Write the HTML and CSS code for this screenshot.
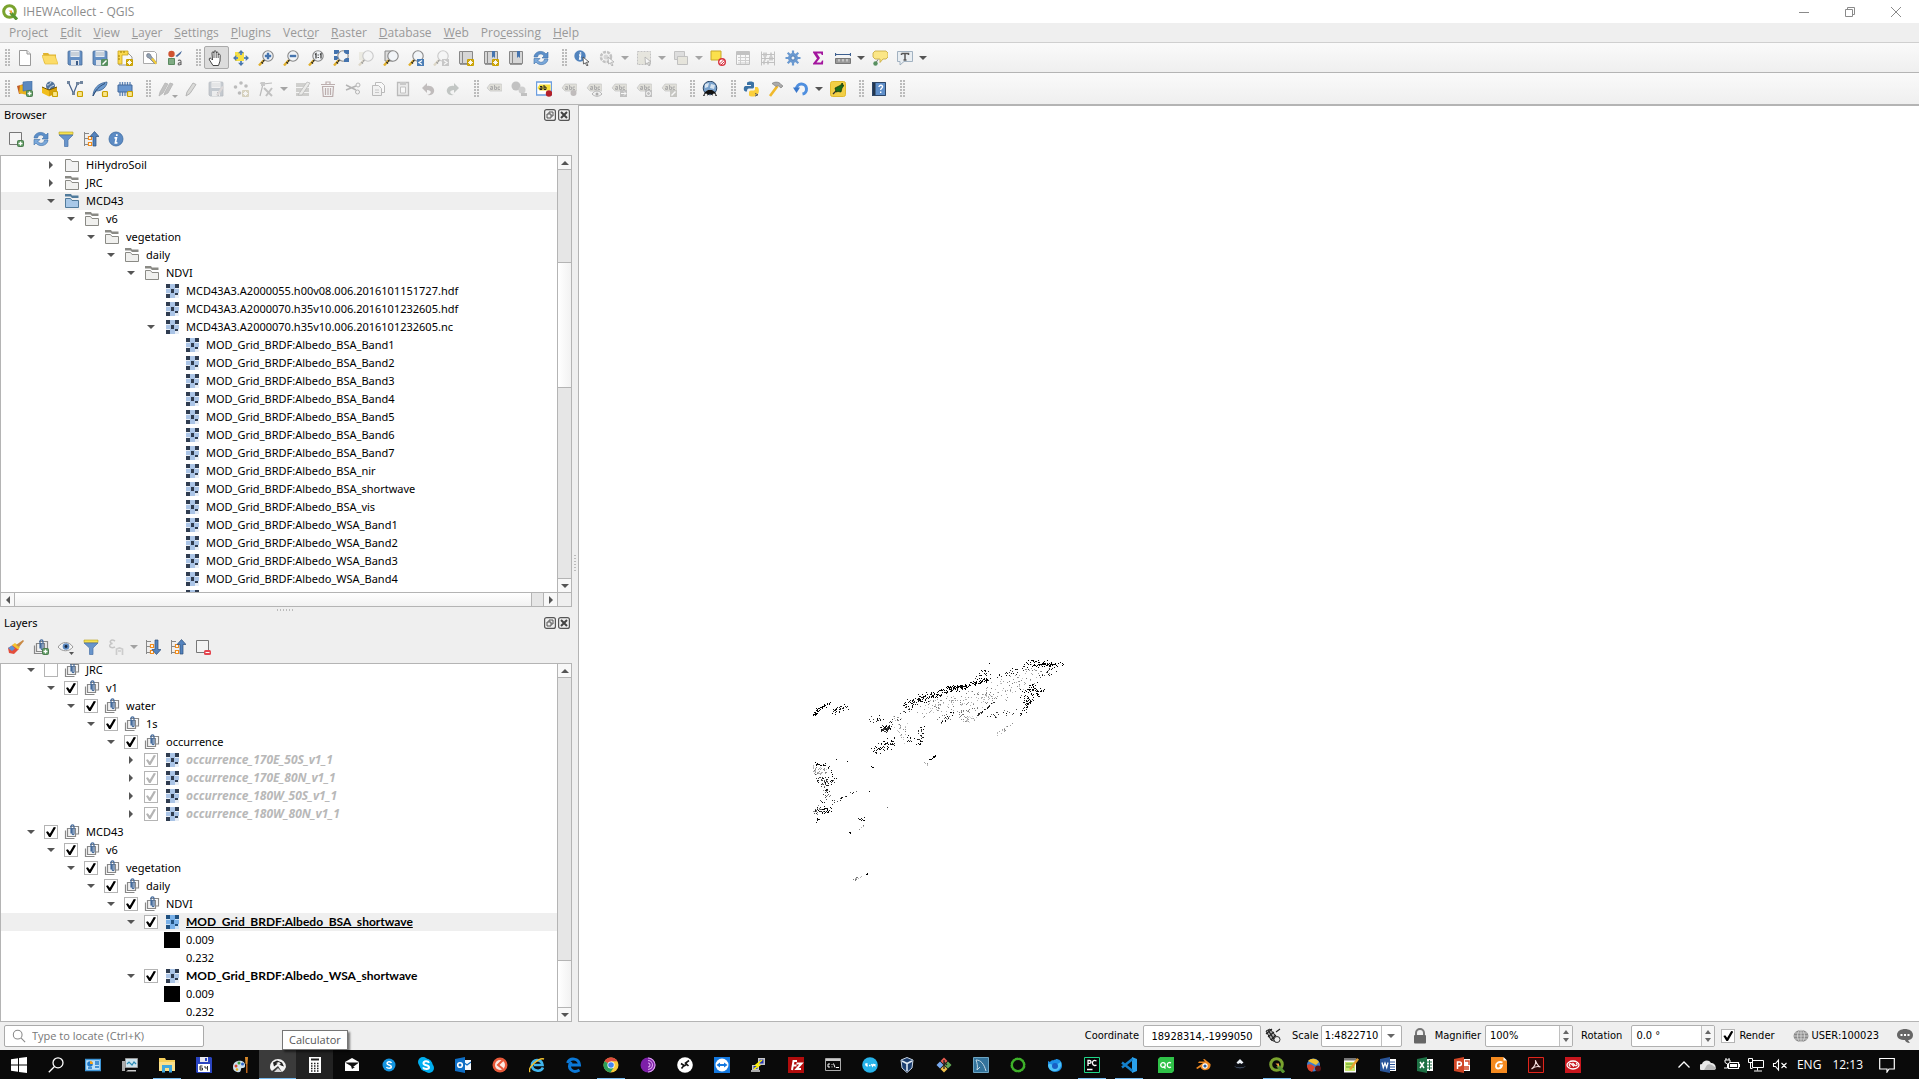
FILE: index.html
```
<!DOCTYPE html>
<html lang="en">
<head>
<meta charset="utf-8">
<title>IHEWAcollect - QGIS</title>
<link rel="stylesheet" href="styles.css">
</head>
<body>
<svg class="sprite" aria-hidden="true">
  <!-- badges -->
  <symbol id="b-plus" viewBox="0 0 16 16"><rect x="9.500" y="9.500" width="6" height="6" rx="1" fill="#5f9a62" stroke="#4b7d4e"/><path d="M12.500 10.500v4M10.500 12.500h4" stroke="#fff" stroke-width="1.300"/></symbol>
  <symbol id="b-star" viewBox="0 0 16 16"><rect x="9" y="9" width="7" height="7" rx="1" fill="#c9a100"/><path d="M12.500 10v5M10 12.500h5M10.800 10.800l3.400 3.400M14.200 10.800l-3.400 3.400" stroke="#fff" stroke-width=".9"/></symbol>
  <symbol id="b-box" viewBox="0 0 16 16"><rect x="10.500" y="10.500" width="5" height="5" rx="1" fill="#fbe68a" stroke="#c9a100" stroke-width="1.200"/></symbol>
  <!-- project -->
  <symbol id="new" viewBox="0 0 16 16"><path d="M2.500.500h7.500l3.500 3.500v11.500h-11z" fill="#fff" stroke="#999"/><path d="M10 .500v3.500h3.500" fill="#eee" stroke="#999"/></symbol>
  <symbol id="open" viewBox="0 0 16 16"><path d="M1 3h5l1.500 1.500H14V13H2z" fill="#e0b32e"/><path d="M0 5.500h13l3 8.500H3z" fill="#fcdc68" stroke="#e3bb3c" stroke-width=".7"/></symbol>
  <symbol id="save" viewBox="0 0 16 16"><path d="M1 2a1 1 0 0 1 1-1h12a1 1 0 0 1 1 1v13H2l-1-1z" fill="#6590c4" stroke="#4a6d99" stroke-width=".8"/><path d="M3.500 1h9v6h-9z" fill="#e6ecf2"/><path d="M4 3h8M4 5h8" stroke="#a8b4c0"/><path d="M4 10h8v5H4z" fill="#dfe4ea"/><path d="M9 11h2v4H9z" fill="#3c5b85"/></symbol>
  <symbol id="saveas" viewBox="0 0 16 16"><use href="#save"/><rect x="9" y="9" width="7" height="7" rx="1" fill="#589060"/><path d="M10.500 14.500l4-4" stroke="#fff" stroke-width="1.500"/></symbol>
  <symbol id="layout" viewBox="0 0 16 16"><path d="M2 3h9l4 4v8H2z" fill="#f8f8f8" stroke="#999"/><path d="M1 1h10v4H5v9H1z" fill="#fbd94d" stroke="#c9a21c" stroke-width=".8"/><path d="M4 1v2M7 1v2M1 6h2M1 9h2" stroke="#a07d00"/><use href="#b-star"/></symbol>
  <symbol id="layouts" viewBox="0 0 16 16"><path d="M1.500 1.500h11l2 2v10h-13z" fill="#fff" stroke="#aaa"/><path d="M5 4c2-1 4 0 4 2l5 6-1.500 1.500L7 8C5 8 4 6 5 4z" fill="#8fa0b0" stroke="#667" stroke-width=".6"/><path d="M9 9l4.500 5.500 1.500-1.500L11 8z" fill="#f3cc39"/></symbol>
  <symbol id="style" viewBox="0 0 16 16"><circle cx="4.500" cy="4" r="3.200" fill="#cf5331"/><path d="M8.500 6L15 .800 13.500 4 10 7z" fill="#45689b"/><path d="M1.500 8.500h6v6h-6z" fill="#7fab83" stroke="#5c8a61"/><path d="M11 10.500c2-1 3 0 3 1v3.500M14 12.500c-3 0-3.500 2-2 2.500 1 0 2-1 2-1" fill="none" stroke="#666" stroke-width="1.100"/></symbol>
  <!-- navigation -->
  <symbol id="hand" viewBox="0 0 16 16"><path d="M5 15.500L1.500 10c-1-1.500.5-2.500 1.500-1.500L4.500 10 4 3c0-1.500 1.700-1.500 2 0V2c0-1.800 2-1.800 2.200 0v1c.3-1.300 2-1.200 2 .3v1.500c.4-1 2-.8 2 .5L12 11l-1.500 4.500z" fill="#fff" stroke="#333" stroke-width=".9"/><path d="M6 3v5M8.200 3v5M10.200 4.500V8" stroke="#333" stroke-width=".8"/></symbol>
  <symbol id="pan" viewBox="0 0 16 16"><path d="M2 2h9v9H2z" fill="#f6e045"/><path d="M8 0l3 3.300H5zM8 16l3-3.300H5zM0 8l3.300-3v6zM16 8l-3.300-3v6z" fill="#4a76ab"/><path d="M7 3h2v2H7zM7 11h2v2H7zM3 7h2v2H3zM11 7h2v2h-2z" fill="#5b8ac0"/></symbol>
  <symbol id="lens" viewBox="0 0 16 16"><path d="M1 15.500L6 10" stroke="#e1b02c" stroke-width="2.400"/><path d="M3.500 12l1.500 1.500M5 11.500l2-2" stroke="#222" stroke-width="1.300"/><circle cx="10" cy="6" r="5.200" fill="#f2f5f8" stroke="#888" stroke-width="1.100"/></symbol>
  <symbol id="zin" viewBox="0 0 16 16"><use href="#lens"/><path d="M10 2.800v6.400M6.800 6h6.400" stroke="#4574ae" stroke-width="2.400"/></symbol>
  <symbol id="zout" viewBox="0 0 16 16"><use href="#lens"/><path d="M6.800 6h6.400" stroke="#4574ae" stroke-width="2.400"/></symbol>
  <symbol id="znative" viewBox="0 0 16 16"><use href="#lens"/><path d="M7 4.500l1-.8V8.500M12 4.500l1-.8V8.500M10.200 4.500v1M10.200 7v1" fill="none" stroke="#333" stroke-width="1.200"/></symbol>
  <symbol id="zfull" viewBox="0 0 16 16"><use href="#lens"/><path d="M1 0h5v2.500L4 4H1zM16 0h-5v2.500L13 4h3zM16 12h-5V9.500L13 8h3zM1 10V6h3l1.500 2L4 10z" fill="#4574ae"/></symbol>
  <symbol id="zsel" viewBox="0 0 16 16"><path d="M1 2h8v8H1z" fill="#e5dc98"/><use href="#lens"/></symbol>
  <symbol id="zlayer" viewBox="0 0 16 16"><path d="M2 1h8v10H2z" fill="#ddd" stroke="#888"/><use href="#lens"/></symbol>
  <symbol id="zlast" viewBox="0 0 16 16"><use href="#lens"/><path d="M9 9h7v7H9z" fill="#4a7db5"/><path d="M14 10.500l-3 2 3 2" fill="none" stroke="#fff" stroke-width="1.300"/></symbol>
  <symbol id="znext" viewBox="0 0 16 16"><use href="#lens"/><path d="M9 9h7v7H9z" fill="#888"/><path d="M11 10.500l3 2-3 2" fill="none" stroke="#fff" stroke-width="1.300"/></symbol>
  <symbol id="book" viewBox="0 0 16 16"><path d="M1.500 1.500h3v12h-3zM4.500 1.500h10v12h-10z" fill="#d6d6d6" stroke="#888"/><path d="M2 14.500h12" stroke="#999"/></symbol>
  <symbol id="newview" viewBox="0 0 16 16"><use href="#book"/><use href="#b-star"/></symbol>
  <symbol id="bookmark" viewBox="0 0 16 16"><use href="#book"/><path d="M9 1h3v7l-1.500-1.500L9 8z" fill="#4574ae"/></symbol>
  <symbol id="newbookmark" viewBox="0 0 16 16"><use href="#bookmark"/><use href="#b-star"/></symbol>
  <symbol id="refresh" viewBox="0 0 16 16"><path d="M1 7c.5-6 9-7.500 12-3l2-2v6H9l2-2C9 3 5 3.500 4.500 7z" fill="#5c8fc9" stroke="#3d6fa8" stroke-width=".6"/><path d="M15 9c-.5 6-9 7.500-12 3l-2 2V8.500h6L5 10.500c2 3 6 2 6.500-1.500z" fill="#7aa8da" stroke="#3d6fa8" stroke-width=".6"/></symbol>
  <!-- attributes -->
  <symbol id="info" viewBox="0 0 16 16"><circle cx="8" cy="8" r="7" fill="#5c8bc4" stroke="#3e6ca3" stroke-width=".8"/><path d="M8.800 3.200v1.900M6.500 6.800h1.900l-1 5h2" fill="none" stroke="#fff" stroke-width="1.700"/></symbol>
  <symbol id="cursor" viewBox="0 0 16 16"><path d="M9 7l6 5-2.600.3L14 15.300l-1.300.5-1.300-3L9.500 14z" fill="#fff" stroke="#444" stroke-width=".8"/></symbol>
  <symbol id="identify" viewBox="0 0 16 16"><circle cx="6" cy="6" r="5.700" fill="#5183bd"/><path d="M6.500 2.200v1.600M5 5h1.500l-.8 4h1.500" fill="none" stroke="#fff" stroke-width="1.500"/><use href="#cursor"/></symbol>
  <symbol id="action" viewBox="0 0 16 16"><circle cx="7" cy="7" r="5" fill="none" stroke="#777" stroke-width="2.500" stroke-dasharray="3 1"/><circle cx="7" cy="7" r="2.500" fill="#aaa"/><use href="#cursor"/></symbol>
  <symbol id="select" viewBox="0 0 16 16"><path d="M1.500 1.500h13v13h-13z" fill="#d8d090" stroke="#777" stroke-dasharray="2 1"/><use href="#cursor"/></symbol>
  <symbol id="selform" viewBox="0 0 16 16"><path d="M1.500 1.500h10v8h-10z" fill="#bbb" stroke="#777"/><path d="M4.500 6.500h10v8h-10z" fill="#ddd28a" stroke="#777"/></symbol>
  <symbol id="deselect" viewBox="0 0 16 16"><path d="M1 1h10v9H1z" fill="#fbe14c" stroke="#c9a92a"/><circle cx="12" cy="12" r="3.300" fill="#fff" stroke="#d6323f" stroke-width="1.400"/><path d="M9.500 14l4.500-4.500M11 15l3.500-3.500" stroke="#d6323f"/></symbol>
  <symbol id="table" viewBox="0 0 16 16"><path d="M1.500 1.500h13v13h-13z" fill="#fff" stroke="#777"/><path d="M1.500 3.500h13" stroke="#777" stroke-width="3"/><path d="M5.500 5v9M10.500 5v9M3 7.500h11M3 10.500h11M3 13h11" stroke="#999"/></symbol>
  <symbol id="abacus" viewBox="0 0 16 16"><path d="M1.500 1.500v14M14.500 1.500v14M1 4.500h14M1 8.500h14M1 12.500h14" stroke="#777"/><path d="M4 2.500v4M6 2.500v4M11 2.500v4M5 6.500v4M10 6.500v4M12 6.500v4M4 10.500v4M8 10.500v4" stroke="#777" stroke-width="1.500"/></symbol>
  <symbol id="gear" viewBox="0 0 16 16"><path d="M8 .500v15M.500 8h15M2.700 2.700l10.600 10.600M13.300 2.700L2.700 13.300" stroke="#6a99d0" stroke-width="2.200"/><circle cx="8" cy="8" r="5" fill="#6a99d0"/><circle cx="8" cy="8" r="2" fill="#eef3f9" stroke="#3e6ca3" stroke-width=".7"/></symbol>
  <symbol id="sigma" viewBox="0 0 16 16"><path d="M3 1.500h10v3.500h-1.200l-.8-1.500H7L10 8l-3.500 4.500H11l1-2h1.200L13 14.500H3v-1L7 8.500 3 2.500z" fill="#a3169e"/></symbol>
  <symbol id="measure" viewBox="0 0 16 16"><path d="M0 4.500h16M.500 3v3M15.500 3v3" stroke="#3d5f8f" stroke-width="1.200"/><path d="M.500 8.500h15v5H.500z" fill="#999" stroke="#777"/><path d="M4 9v2.500M8 9v2.500M12 9v2.500" stroke="#eee"/></symbol>
  <symbol id="maptip" viewBox="0 0 16 16"><path d="M3 1h11l2 2v4l-2 2h-3l-3 3.500V9H3L1 7V3z" fill="#fbe686" stroke="#c4a63a" stroke-width=".8"/><path d="M6 9.500l-2 3" stroke="#777"/><circle cx="3.500" cy="13.500" r="2.200" fill="#589060"/></symbol>
  <symbol id="textnote" viewBox="0 0 16 16"><path d="M.500 1.500h15v10H7l-4 3.500v-3.500H.500z" fill="#e9eef2" stroke="#9ab" stroke-width=".9"/><path d="M4.500 3.500h7V5M8 3.500V10M6.500 10h3M4.500 5V3.500" fill="none" stroke="#555" stroke-width="1.500"/></symbol>
  <!-- data sources -->
  <symbol id="dsm" viewBox="0 0 16 16"><path d="M0 5l7-2 2 8-7 2z" fill="#c05b26"/><path d="M3 4l8 1-1 9-8-2z" fill="#e8b21c"/><path d="M6 1l9-1v9l-9 1z" fill="#5b88bf" stroke="#3e6ca3" stroke-width=".6"/><use href="#b-plus"/></symbol>
  <symbol id="gpkg" viewBox="0 0 16 16"><circle cx="8.500" cy="5" r="4.500" fill="#50729b"/><path d="M5 4c2 0 3-1 4-3M7 8c1-3 4-3 5-4" stroke="#dce7f1" fill="none"/><path d="M0 6l7 3v6.500L0 12z" fill="#f1be1c"/><path d="M7 9l8-3v6l-8 3.500z" fill="#d9a20a"/><path d="M0 6l7 3 8-3" fill="none" stroke="#6e5300"/><use href="#b-box"/></symbol>
  <symbol id="shp" viewBox="0 0 16 16"><path d="M1.500 1.500l5 11 4-10 4-1" fill="none" stroke="#46618a" stroke-width="1.200"/><path d="M0 0h3v3H0zM9 1h3v3H9zM13 0h3v3h-3zM5 11h3v3H5z" fill="#71859e"/><use href="#b-box"/></symbol>
  <symbol id="spatialite" viewBox="0 0 16 16"><path d="M1 15C1 9 5 2 15 1c0 4-4 9-11 9z" fill="#6c9bd0" stroke="#3b6496" stroke-width=".8"/><path d="M1 15C3 10 7 5 13 2.500" fill="none" stroke="#2d4c75"/><use href="#b-box"/></symbol>
  <symbol id="chip" viewBox="0 0 16 16"><path d="M3 1v14M5.500 1v14M8 1v14M10.500 1v14M13 1v14" stroke="#5c83b4" stroke-width="1.300"/><path d="M1 4h14v7H1z" fill="#6896cf" stroke="#42699b"/><use href="#b-box"/></symbol>
  <!-- editing -->
  <symbol id="pencils" viewBox="0 0 16 16"><path d="M1 15l1-4 5-9 3 1-5 9zM6 14l1-3 5-9 3 1-5 9z" fill="#777" stroke="#555" stroke-width=".8"/></symbol>
  <symbol id="pencil" viewBox="0 0 16 16"><path d="M3 15l1-4 6-9 3 1.500-6 9z" fill="#b5b5a5" stroke="#555"/></symbol>
  <symbol id="saveedit" viewBox="0 0 16 16"><use href="#save"/><path d="M8 14l6-9 2 1-6 9z" fill="#caa"/></symbol>
  <symbol id="addpt" viewBox="0 0 16 16"><circle cx="2.500" cy="6" r="1.800" fill="#666"/><circle cx="6.500" cy="12" r="1.800" fill="#666"/><circle cx="8" cy="2" r="1.800" fill="#666"/><circle cx="13" cy="5" r="1.800" fill="#666"/><use href="#b-star"/></symbol>
  <symbol id="vertex" viewBox="0 0 16 16"><path d="M2 15L5 3l9-1M5 3l-3-1" fill="none" stroke="#666" stroke-width="1.200"/><path d="M3 1h4v4H3z" fill="#888"/><path d="M6 7l8 8M14 7l-6 8" stroke="#777" stroke-width="2"/></symbol>
  <symbol id="multiedit" viewBox="0 0 16 16"><path d="M1 2h13v4H1zM1 7h13v4H1zM1 12h13v3H1z" fill="#998"/><path d="M3 14L12 1l3 1-8 12z" fill="#ddc" stroke="#555" stroke-width=".7"/></symbol>
  <symbol id="trash" viewBox="0 0 16 16"><path d="M1 3.500h14M6 3V1h4v2M2.500 5.500h11l-.8 10H3.300zM5.500 7v7M8 7v7M10.500 7v7" fill="none" stroke="#a33" stroke-width="1.200"/></symbol>
  <symbol id="cut" viewBox="0 0 16 16"><path d="M1 4l10 5M1 9l10-4" stroke="#555" stroke-width="1.500"/><circle cx="13" cy="4" r="2" fill="none" stroke="#555"/><circle cx="12.500" cy="11" r="2" fill="none" stroke="#555"/></symbol>
  <symbol id="copy" viewBox="0 0 16 16"><path d="M5.500 1.500h6l3 3v7h-9z" fill="#fff" stroke="#666"/><path d="M2.500 4.500h6l3 3v7h-9z" fill="#eee" stroke="#666"/><path d="M5 9h4M5 11.500h4" stroke="#888"/></symbol>
  <symbol id="paste" viewBox="0 0 16 16"><path d="M2.500 1.500h11v13h-11z" fill="#ddd" stroke="#666" stroke-width="1.300"/><path d="M5 1h6v3H5z" fill="#888"/><path d="M5.500 6h5v6h-5z" fill="#fff" stroke="#777"/></symbol>
  <symbol id="undo" viewBox="0 0 16 16"><path d="M2 7l5-5v3c5-1 8 3 7 6-1 3-4 3.500-7 3 5-1 5-5 0-5v3z" fill="#866"/></symbol>
  <symbol id="redo" viewBox="0 0 16 16"><path d="M14 7L9 2v3C4 4 1 8 2 11c1 3 4 3.500 7 3-5-1-5-5 0-5v3z" fill="#687"/></symbol>
  <!-- labels -->
  <symbol id="tag" viewBox="0 0 16 16"><path d="M1 7l3-4h11a1 1 0 0 1 1 1v6H4z" fill="#c8c28c" stroke="#888" stroke-width=".8"/><path d="M4.500 5.500h2v3h-2v-1.500h2M8.500 4v4.500h2V6h-2M14 6h-2v2.500h2" fill="none" stroke="#444"/></symbol>
  <symbol id="diag" viewBox="0 0 16 16"><circle cx="5" cy="5" r="4.500" fill="#777"/><circle cx="11" cy="9" r="3.500" fill="#999"/><path d="M10 12h6v3h-6z" fill="#777"/></symbol>
  <symbol id="pinlab" viewBox="0 0 16 16"><path d="M.500 1h15v13H.500z" fill="#fff" stroke="#6d9fe0" stroke-width="1.400"/><path d="M1.500 7l2-3.500h11V9.500h-11z" fill="#f6df3a"/><path d="M4 5.500h2v3H4V7h2M8 4v4.500h2V6H8" fill="none" stroke="#222"/><circle cx="13" cy="12.500" r="3.200" fill="#b3202a"/></symbol>
  <symbol id="tagpin" viewBox="0 0 16 16"><use href="#tag"/><circle cx="12.500" cy="12" r="3" fill="#866"/></symbol>
  <symbol id="tageye" viewBox="0 0 16 16"><use href="#tag"/><path d="M6 13c3-4 7-4 10 0-3 3-7 3-10 0z" fill="#eee" stroke="#555"/><circle cx="11" cy="13" r="1.500" fill="#444"/></symbol>
  <symbol id="tagmove" viewBox="0 0 16 16"><use href="#tag"/><path d="M9 9h7v7H9z" fill="#777"/><path d="M10 12.500h5M13 10.500l2 2-2 2" fill="none" stroke="#fff"/></symbol>
  <symbol id="tagrot" viewBox="0 0 16 16"><use href="#tag"/><path d="M9 9h7v7H9z" fill="#777"/><circle cx="12.500" cy="12.500" r="2" fill="none" stroke="#fff"/></symbol>
  <symbol id="tagedit" viewBox="0 0 16 16"><use href="#tag"/><path d="M9 9h7v7H9z" fill="#886"/><path d="M10.500 14.500l4-4" stroke="#fff" stroke-width="1.400"/></symbol>
  <!-- plugins -->
  <symbol id="metasearch" viewBox="0 0 16 16"><circle cx="8" cy="7" r="6.800" fill="#7aa2cc" stroke="#2c4766"/><path d="M3 3l4-1-1 4-3 1zM9 3l4 1-1 4-4-1zM5 9l3 0-1 3z" fill="#d6e4f0"/><path d="M3 11l3-2h4l3 2 2 4h-4l-2-2H7l-2 2H1z" fill="#111"/><circle cx="4" cy="14" r="1.500" fill="#eee"/><circle cx="12" cy="14" r="1.500" fill="#eee"/></symbol>
  <symbol id="python" viewBox="0 0 16 16"><path d="M4 4V2c0-2 7-2 7 0v4c0 1-1 1.500-2 1.500H6c-1.500 0-2 1-2 3H2.500C0 10 .500 5 2.500 5H8V4z" fill="#3a72a5"/><path d="M6 12v2c0 2 7 2 7 0v-1h2c1.500-2 1-7-1-7h-2v2c0 1-1 1.500-2 1.500H8c-1.500 0-2 1-2 2.500z" fill="#fbcf3c"/><path d="M12 12.500l3 1.300-3 1.300" fill="none" stroke="#555"/></symbol>
  <symbol id="hammer" viewBox="0 0 16 16"><path d="M2 15L9.500 5" stroke="#f0b92d" stroke-width="2.600"/><path d="M4 2.500c3-2 7-2 9 1l2 1.500-2 2-3-2.500-2 1z" fill="#aaa" stroke="#777" stroke-width=".6"/></symbol>
  <symbol id="reload" viewBox="0 0 16 16"><path d="M3.500 8a5 5 0 1 1 6 5" fill="none" stroke="#4f8fdf" stroke-width="3"/><path d="M0 6.500h7L3.500 12z" fill="#3a78cc"/></symbol>
  <symbol id="plug" viewBox="0 0 16 16"><rect x=".5" y=".5" width="15" height="15" rx="2" fill="#f2cf45" stroke="#e0b92f"/><path d="M3 13l3-3" stroke="#333" stroke-width="1.200"/><path d="M5 7l6-3 1-2 1 1-1 1.500 1.500-.5v1L12 7l-1 4-3-.500L6 11z" fill="#1a6a1a" stroke="#0d330d" stroke-width=".7"/></symbol>
  <symbol id="help" viewBox="0 0 16 16"><path d="M1 1h14v14H1z" fill="#5f8fca"/><path d="M1 1h3.500v14H1z" fill="#23364e"/><path d="M1.500 1.500h13v13h-13z" fill="none" stroke="#2d4769"/><path d="M8 6c0-2.300 4-2.300 3.500.2-.3 1.200-1.800 1.200-1.800 2.800M9.700 10.500V12" fill="none" stroke="#fff" stroke-width="1.400"/></symbol>
  <!-- panel tools -->
  <symbol id="addsel" viewBox="0 0 16 16"><path d="M1.500 1.500h12v12h-12z" fill="#f4f4f4" stroke="#777"/><use href="#b-plus"/></symbol>
  <symbol id="filter" viewBox="0 0 16 16"><path d="M1 1h14v2.500H1z" fill="#f6e251" stroke="#b59e1d" stroke-width=".6"/><path d="M1 4h14l-5 5v6.500H6.500V9z" fill="#6794cb" stroke="#4a73a8" stroke-width=".7"/></symbol>
  <symbol id="treebits" viewBox="0 0 16 16"><path d="M1.500 15V1M1 2.500h5M2 7.500h3M2 13.500h3" fill="none" stroke="#888"/><path d="M5.500 5.500h3v3h-3zM5.500 11.500h3v3h-3z" fill="#fff" stroke="#f18c1c" stroke-width="1.200"/></symbol>
  <symbol id="collapse" viewBox="0 0 16 16"><use href="#treebits"/><path d="M11.500.500l4.500 5h-3V15h-3V5.500H7z" fill="#5483bd" stroke="#2c4d78" stroke-width=".7"/></symbol>
  <symbol id="expand" viewBox="0 0 16 16"><use href="#treebits"/><path d="M11.500 15.500l4.500-5h-3V1h-3v9.500H7z" fill="#5483bd" stroke="#2c4d78" stroke-width=".7"/></symbol>
  <symbol id="brush" viewBox="0 0 16 16"><path d="M0 9l5-3 6 4-5 5-5-1z" fill="#e34e3c"/><path d="M4 6l3-2 5 4-2 2.500z" fill="#f3c32e"/><path d="M0 9l4-2.500 3 3L4 12z" fill="#5c93d6"/><path d="M8 6l7-5 1 1-5 6z" fill="#c98a45"/></symbol>
  <symbol id="group" viewBox="0 0 16 16"><path d="M1.500 6.500v8h9" fill="none" stroke="#888" stroke-width="1.200"/><path d="M3.500 4.500h8v8h-8z" fill="#f2f2f2" stroke="#888" stroke-width="1.200"/><path d="M6 2.500h8.500v7.500H12" fill="none" stroke="#888" stroke-width="1.200"/><path d="M7 9.500V2.500c0-2.300 3-2.300 3 0v7c0 1.500-1.800 1.500-1.800 0V4" fill="none" stroke="#42699b" stroke-width="1.200"/></symbol>
  <symbol id="addgroup" viewBox="0 0 16 16"><use href="#group"/><use href="#b-plus"/></symbol>
  <symbol id="eye" viewBox="0 0 16 16"><path d="M0 8c4-6 11-6 15 0-4 5-11 5-15 0z" fill="#f5f5f5" stroke="#999"/><circle cx="8" cy="7.500" r="3.300" fill="#5b88c0"/><circle cx="8" cy="7.500" r="1.400" fill="#16273e"/><path d="M11 13h5l-2.500 3z" fill="#555"/></symbol>
  <symbol id="expr" viewBox="0 0 16 16"><path d="M7 2C3-.500 0 3.500 4.500 4.500 0 5 1 10.500 7 8" fill="none" stroke="#888" stroke-width="1.500"/><path d="M8.500 16V10l3-1 3 1v6M10 12h3" fill="none" stroke="#999" stroke-width="1.700"/></symbol>
  <symbol id="remove" viewBox="0 0 16 16"><path d="M1.500 1.500h12v12h-12z" fill="#f4f4f4" stroke="#777"/><rect x="9" y="11" width="7" height="5" rx="1.500" fill="#e4454f"/><path d="M10.500 13.500h4" stroke="#fff"/></symbol>
  <!-- tree -->
  <symbol id="folder" viewBox="0 0 16 16"><path d="M1.500 14.500v-12h5l1.500 2h6.500v10z" fill="#f2f2f2" stroke="#8a8a85"/></symbol>
  <symbol id="folders" viewBox="0 0 16 16"><path d="M1 1h6l1 1.500h6.500V5H8L6.500 3.500H1z" fill="#8a8a85"/><path d="M1.500 14.500v-9h5L8 7.500h6.500v7z" fill="#f0f0ee" stroke="#8a8a85"/></symbol>
  <symbol id="foldersel" viewBox="0 0 16 16"><path d="M1 1h6l1 1.500h6.500V5H8L6.500 3.500H1z" fill="#517b9c"/><path d="M1.500 14.500v-9h5L8 7.500h6.500v7z" fill="#a8c8e8" stroke="#517b9c"/></symbol>
  <symbol id="raster" viewBox="0 0 16 16"><path d="M2 1h13v14H2z" fill="#e6edf6"/><path d="M6 1h5v14H6zM2 6h4v4H2zM11 6h4v4h-4z" fill="#aac4e6"/><path d="M2 1h4v4H2zM11 1h4v4h-4zM7 6h3v4H7zM2 11h4v4H2zM11 10h3v2h-3z" fill="#2f3c50"/></symbol>
  <symbol id="rastersel" viewBox="0 0 16 16"><path d="M2 1h13v14H2z" fill="#c8e0f6"/><path d="M6 1h5v14H6zM2 6h4v4H2zM11 6h4v4h-4z" fill="#78b0e8"/><path d="M2 1h4v4H2zM11 1h4v4h-4zM7 6h3v4H7zM2 11h4v4H2zM11 10h3v2h-3z" fill="#1f5080"/></symbol>
  <symbol id="float" viewBox="0 0 12 12"><rect x=".6" y=".6" width="10.800" height="10.800" rx="2" fill="none" stroke="#555" stroke-width="1.200"/><path d="M5 5V3h4v4H7M3 5h4v4H3z" fill="none" stroke="#555"/></symbol>
  <symbol id="close" viewBox="0 0 12 12"><rect x=".6" y=".6" width="10.800" height="10.800" rx="2" fill="none" stroke="#555" stroke-width="1.200"/><path d="M3 3l6 6M9 3L3 9" stroke="#444" stroke-width="2"/></symbol>
  <symbol id="qgis" viewBox="0 0 16 16"><circle cx="7.500" cy="7.500" r="5.800" fill="none" stroke="#7aa32e" stroke-width="3"/><path d="M8.500 8.500l6.500 7" stroke="#589632" stroke-width="3.200"/><path d="M6.500 6.500h3.500v3.500z" fill="#f1a23c"/></symbol>
  <symbol id="track" viewBox="0 0 16 16"><path d="M1 3l4-2 5 6 1 7-5-2z" fill="#aaa" stroke="#222"/><path d="M3 2l7 11M1 6l6-5M3 9l6-5M6 12l5-5M11 4l4-3" stroke="#222" stroke-width="1.100"/><circle cx="12" cy="11.500" r="3" fill="#eee" stroke="#333"/></symbol>
  <symbol id="lock" viewBox="0 0 16 16"><path d="M4 8V5a4 4 0 0 1 8 0v3" fill="none" stroke="#777" stroke-width="2"/><rect x="2" y="7" width="12" height="8.500" rx="1" fill="#666"/></symbol>
  <symbol id="globe" viewBox="0 0 16 16"><ellipse cx="8" cy="8" rx="7.500" ry="6" fill="#888"/><path d="M.500 8h15M8 2v12M2 5h12M2 11h12" stroke="#ddd" stroke-width=".8"/><ellipse cx="8" cy="8" rx="3.500" ry="6" fill="none" stroke="#ddd" stroke-width=".8"/></symbol>
  <symbol id="bubble" viewBox="0 0 16 16"><path d="M0 7c0-8 16-8 16 0 0 4-3 5-5 5 1 2 2 3 2 3-3 0-5-2-5-3-5 0-8-2-8-5z" fill="#666"/><path d="M3.500 7h2M7 7h2M10.500 7h2" stroke="#fff" stroke-width="2"/></symbol>
  <symbol id="mag" viewBox="0 0 16 16"><circle cx="6.500" cy="6.500" r="5" fill="none" stroke="#888" stroke-width="1.200"/><path d="M10.500 10.500l4.500 4.500" stroke="#888" stroke-width="1.200"/></symbol>
</svg>

<header class="titlebar">
  <svg class="i"><use href="#qgis"/></svg><span>IHEWAcollect - QGIS</span>
  <div class="winctl">
    <button aria-label="Minimize"><svg viewBox="0 0 10 10"><path d="M0 5.500h10" stroke="#8a8a8a"/></svg></button>
    <button aria-label="Restore"><svg viewBox="0 0 10 10"><path d="M.500 2.500h7v7h-7zM2.500 2.500v-2h7v7h-2" fill="none" stroke="#8a8a8a"/></svg></button>
    <button aria-label="Close"><svg viewBox="0 0 10 10"><path d="M0 0l10 10M10 0L0 10" stroke="#8a8a8a"/></svg></button>
  </div>
</header>
<nav class="menubar">
  <button>Pro<u>j</u>ect</button><button><u>E</u>dit</button><button><u>V</u>iew</button><button><u>L</u>ayer</button><button><u>S</u>ettings</button><button><u>P</u>lugins</button><button>Vect<u>o</u>r</button><button><u>R</u>aster</button><button><u>D</u>atabase</button><button><u>W</u>eb</button><button>Pro<u>c</u>essing</button><button><u>H</u>elp</button>
</nav>
<div class="toolbar" role="toolbar" aria-label="Project and map">
  <i class="grip"></i>
  <button class="tb" aria-label="New"><svg class="i"><use href="#new"/></svg></button>
  <button class="tb" aria-label="Open"><svg class="i"><use href="#open"/></svg></button>
  <button class="tb" aria-label="Save"><svg class="i"><use href="#save"/></svg></button>
  <button class="tb" aria-label="Save as"><svg class="i"><use href="#saveas"/></svg></button>
  <button class="tb" aria-label="New layout"><svg class="i"><use href="#layout"/></svg></button>
  <button class="tb" aria-label="Layout manager"><svg class="i"><use href="#layouts"/></svg></button>
  <button class="tb" aria-label="Style manager"><svg class="i"><use href="#style"/></svg></button>
  <i class="grip"></i>
  <button class="tb on" aria-label="Pan"><svg class="i"><use href="#hand"/></svg></button>
  <button class="tb" aria-label="Pan to selection"><svg class="i"><use href="#pan"/></svg></button>
  <button class="tb" aria-label="Zoom in"><svg class="i"><use href="#zin"/></svg></button>
  <button class="tb" aria-label="Zoom out"><svg class="i"><use href="#zout"/></svg></button>
  <button class="tb" aria-label="Native zoom"><svg class="i"><use href="#znative"/></svg></button>
  <button class="tb" aria-label="Zoom full"><svg class="i"><use href="#zfull"/></svg></button>
  <button class="tb" disabled aria-label="Zoom to selection"><svg class="i"><use href="#zsel"/></svg></button>
  <button class="tb" aria-label="Zoom to layer"><svg class="i"><use href="#zlayer"/></svg></button>
  <button class="tb" aria-label="Zoom last"><svg class="i"><use href="#zlast"/></svg></button>
  <button class="tb" disabled aria-label="Zoom next"><svg class="i"><use href="#znext"/></svg></button>
  <button class="tb" aria-label="New map view"><svg class="i"><use href="#newview"/></svg></button>
  <button class="tb" aria-label="New bookmark"><svg class="i"><use href="#newbookmark"/></svg></button>
  <button class="tb" aria-label="Bookmarks"><svg class="i"><use href="#bookmark"/></svg></button>
  <button class="tb" aria-label="Refresh"><svg class="i"><use href="#refresh"/></svg></button>
  <i class="grip"></i>
  <button class="tb" aria-label="Identify"><svg class="i"><use href="#identify"/></svg></button>
  <button class="tb more" disabled aria-label="Actions"><svg class="i"><use href="#action"/></svg></button>
  <button class="tb more" disabled aria-label="Select"><svg class="i"><use href="#select"/></svg></button>
  <button class="tb more" disabled aria-label="Select by form"><svg class="i"><use href="#selform"/></svg></button>
  <button class="tb" aria-label="Deselect"><svg class="i"><use href="#deselect"/></svg></button>
  <button class="tb" disabled aria-label="Attribute table"><svg class="i"><use href="#table"/></svg></button>
  <button class="tb" disabled aria-label="Field calculator"><svg class="i"><use href="#abacus"/></svg></button>
  <button class="tb" aria-label="Processing toolbox"><svg class="i"><use href="#gear"/></svg></button>
  <button class="tb" aria-label="Statistics"><svg class="i"><use href="#sigma"/></svg></button>
  <button class="tb more" aria-label="Measure"><svg class="i"><use href="#measure"/></svg></button>
  <button class="tb" aria-label="Map tips"><svg class="i"><use href="#maptip"/></svg></button>
  <button class="tb more" aria-label="Annotation"><svg class="i"><use href="#textnote"/></svg></button>
</div>
<div class="toolbar second" role="toolbar" aria-label="Layers and editing">
  <i class="grip"></i>
  <button class="tb" aria-label="Data sources"><svg class="i"><use href="#dsm"/></svg></button>
  <button class="tb" aria-label="New GeoPackage"><svg class="i"><use href="#gpkg"/></svg></button>
  <button class="tb" aria-label="New shapefile"><svg class="i"><use href="#shp"/></svg></button>
  <button class="tb" aria-label="New SpatiaLite"><svg class="i"><use href="#spatialite"/></svg></button>
  <button class="tb" aria-label="New scratch layer"><svg class="i"><use href="#chip"/></svg></button>
  <i class="grip"></i>
  <button class="tb corner" disabled aria-label="Current edits"><svg class="i"><use href="#pencils"/></svg></button>
  <button class="tb" disabled aria-label="Toggle editing"><svg class="i"><use href="#pencil"/></svg></button>
  <button class="tb" disabled aria-label="Save edits"><svg class="i"><use href="#saveedit"/></svg></button>
  <button class="tb" disabled aria-label="Add feature"><svg class="i"><use href="#addpt"/></svg></button>
  <button class="tb more" disabled aria-label="Vertex tool"><svg class="i"><use href="#vertex"/></svg></button>
  <button class="tb" disabled aria-label="Modify attributes"><svg class="i"><use href="#multiedit"/></svg></button>
  <button class="tb" disabled aria-label="Delete"><svg class="i"><use href="#trash"/></svg></button>
  <button class="tb" disabled aria-label="Cut"><svg class="i"><use href="#cut"/></svg></button>
  <button class="tb" disabled aria-label="Copy"><svg class="i"><use href="#copy"/></svg></button>
  <button class="tb" disabled aria-label="Paste"><svg class="i"><use href="#paste"/></svg></button>
  <button class="tb" disabled aria-label="Undo"><svg class="i"><use href="#undo"/></svg></button>
  <button class="tb" disabled aria-label="Redo"><svg class="i"><use href="#redo"/></svg></button>
  <i class="grip"></i>
  <button class="tb" disabled aria-label="Labels"><svg class="i"><use href="#tag"/></svg></button>
  <button class="tb" disabled aria-label="Diagrams"><svg class="i"><use href="#diag"/></svg></button>
  <button class="tb" aria-label="Highlight pinned labels"><svg class="i"><use href="#pinlab"/></svg></button>
  <button class="tb" disabled aria-label="Pin labels"><svg class="i"><use href="#tagpin"/></svg></button>
  <button class="tb" disabled aria-label="Show labels"><svg class="i"><use href="#tageye"/></svg></button>
  <button class="tb" disabled aria-label="Move label"><svg class="i"><use href="#tagmove"/></svg></button>
  <button class="tb" disabled aria-label="Rotate label"><svg class="i"><use href="#tagrot"/></svg></button>
  <button class="tb" disabled aria-label="Change label"><svg class="i"><use href="#tagedit"/></svg></button>
  <i class="grip"></i>
  <button class="tb" aria-label="MetaSearch"><svg class="i"><use href="#metasearch"/></svg></button>
  <i class="grip"></i>
  <button class="tb" aria-label="Python console"><svg class="i"><use href="#python"/></svg></button>
  <button class="tb" aria-label="Plugin builder"><svg class="i"><use href="#hammer"/></svg></button>
  <button class="tb more" aria-label="Reload plugin"><svg class="i"><use href="#reload"/></svg></button>
  <button class="tb" aria-label="Plugin"><svg class="i"><use href="#plug"/></svg></button>
  <i class="grip"></i>
  <button class="tb" aria-label="Help contents"><svg class="i"><use href="#help"/></svg></button>
  <i class="grip"></i>
</div>

<main class="work">
  <div class="dock">
    <section class="panel browser">
      <div class="phead"><h2>Browser</h2><button aria-label="Float"><svg><use href="#float"/></svg></button><button aria-label="Close panel"><svg><use href="#close"/></svg></button></div>
      <div class="ptools">
        <button class="tb" aria-label="Add layers"><svg class="i"><use href="#addsel"/></svg></button>
        <button class="tb" aria-label="Refresh"><svg class="i"><use href="#refresh"/></svg></button>
        <button class="tb" aria-label="Filter"><svg class="i"><use href="#filter"/></svg></button>
        <button class="tb" aria-label="Collapse all"><svg class="i"><use href="#collapse"/></svg></button>
        <button class="tb" aria-label="Properties"><svg class="i"><use href="#info"/></svg></button>
      </div>
      <div class="view">
        <ul class="tree">
          <li class="d2"><i class="tw shut"></i><svg class="i"><use href="#folder"/></svg>HiHydroSoil</li>
          <li class="d2"><i class="tw shut"></i><svg class="i"><use href="#folders"/></svg>JRC</li>
          <li class="d2 cur"><i class="tw open"></i><svg class="i"><use href="#foldersel"/></svg>MCD43</li>
          <li class="d3"><i class="tw open"></i><svg class="i"><use href="#folders"/></svg>v6</li>
          <li class="d4"><i class="tw open"></i><svg class="i"><use href="#folders"/></svg>vegetation</li>
          <li class="d5"><i class="tw open"></i><svg class="i"><use href="#folders"/></svg>daily</li>
          <li class="d6"><i class="tw open"></i><svg class="i"><use href="#folders"/></svg>NDVI</li>
          <li class="d7"><i class="tw"></i><svg class="i"><use href="#raster"/></svg>MCD43A3.A2000055.h00v08.006.2016101151727.hdf</li>
          <li class="d7"><i class="tw"></i><svg class="i"><use href="#raster"/></svg>MCD43A3.A2000070.h35v10.006.2016101232605.hdf</li>
          <li class="d7"><i class="tw open"></i><svg class="i"><use href="#raster"/></svg>MCD43A3.A2000070.h35v10.006.2016101232605.nc</li>
          <li class="d8"><i class="tw"></i><svg class="i"><use href="#raster"/></svg>MOD_Grid_BRDF:Albedo_BSA_Band1</li>
          <li class="d8"><i class="tw"></i><svg class="i"><use href="#raster"/></svg>MOD_Grid_BRDF:Albedo_BSA_Band2</li>
          <li class="d8"><i class="tw"></i><svg class="i"><use href="#raster"/></svg>MOD_Grid_BRDF:Albedo_BSA_Band3</li>
          <li class="d8"><i class="tw"></i><svg class="i"><use href="#raster"/></svg>MOD_Grid_BRDF:Albedo_BSA_Band4</li>
          <li class="d8"><i class="tw"></i><svg class="i"><use href="#raster"/></svg>MOD_Grid_BRDF:Albedo_BSA_Band5</li>
          <li class="d8"><i class="tw"></i><svg class="i"><use href="#raster"/></svg>MOD_Grid_BRDF:Albedo_BSA_Band6</li>
          <li class="d8"><i class="tw"></i><svg class="i"><use href="#raster"/></svg>MOD_Grid_BRDF:Albedo_BSA_Band7</li>
          <li class="d8"><i class="tw"></i><svg class="i"><use href="#raster"/></svg>MOD_Grid_BRDF:Albedo_BSA_nir</li>
          <li class="d8"><i class="tw"></i><svg class="i"><use href="#raster"/></svg>MOD_Grid_BRDF:Albedo_BSA_shortwave</li>
          <li class="d8"><i class="tw"></i><svg class="i"><use href="#raster"/></svg>MOD_Grid_BRDF:Albedo_BSA_vis</li>
          <li class="d8"><i class="tw"></i><svg class="i"><use href="#raster"/></svg>MOD_Grid_BRDF:Albedo_WSA_Band1</li>
          <li class="d8"><i class="tw"></i><svg class="i"><use href="#raster"/></svg>MOD_Grid_BRDF:Albedo_WSA_Band2</li>
          <li class="d8"><i class="tw"></i><svg class="i"><use href="#raster"/></svg>MOD_Grid_BRDF:Albedo_WSA_Band3</li>
          <li class="d8"><i class="tw"></i><svg class="i"><use href="#raster"/></svg>MOD_Grid_BRDF:Albedo_WSA_Band4</li>
          <li class="d8"><i class="tw"></i><svg class="i"><use href="#raster"/></svg></li>
        </ul>
        <div class="vbar"><i class="btn up"></i><i class="gap mid"></i><i class="thumb long"></i><i class="gap low"></i><i class="btn down"></i></div>
        <div class="hbar"><i class="btn left"></i><i class="thumb"></i><i class="gap"></i><i class="btn right"></i></div>
        <div class="corner-cell"></div>
      </div>
    </section>
    <div class="splitter"><i></i></div>
    <section class="panel layers">
      <div class="phead"><h2>Layers</h2><button aria-label="Float"><svg><use href="#float"/></svg></button><button aria-label="Close panel"><svg><use href="#close"/></svg></button></div>
      <div class="ptools">
        <button class="tb" aria-label="Styling"><svg class="i"><use href="#brush"/></svg></button>
        <button class="tb" aria-label="Add group"><svg class="i"><use href="#addgroup"/></svg></button>
        <button class="tb" aria-label="Map themes"><svg class="i"><use href="#eye"/></svg></button>
        <button class="tb" aria-label="Filter legend"><svg class="i"><use href="#filter"/></svg></button>
        <button class="tb more" disabled aria-label="Filter by expression"><svg class="i"><use href="#expr"/></svg></button>
        <button class="tb" aria-label="Expand all"><svg class="i"><use href="#expand"/></svg></button>
        <button class="tb" aria-label="Collapse all"><svg class="i"><use href="#collapse"/></svg></button>
        <button class="tb" aria-label="Remove layer"><svg class="i"><use href="#remove"/></svg></button>
      </div>
      <div class="view novh">
        <ul class="tree bottom">
          <li class="d1"><i class="tw open"></i><label><input type="checkbox"><svg class="i"><use href="#group"/></svg>JRC</label></li>
          <li class="d2"><i class="tw open"></i><label><input type="checkbox" checked><svg class="i"><use href="#group"/></svg>v1</label></li>
          <li class="d3"><i class="tw open"></i><label><input type="checkbox" checked><svg class="i"><use href="#group"/></svg>water</label></li>
          <li class="d4"><i class="tw open"></i><label><input type="checkbox" checked><svg class="i"><use href="#group"/></svg>1s</label></li>
          <li class="d5"><i class="tw open"></i><label><input type="checkbox" checked><svg class="i"><use href="#group"/></svg>occurrence</label></li>
          <li class="d6 off"><i class="tw shut"></i><label><input type="checkbox" checked><svg class="i"><use href="#raster"/></svg>occurrence_170E_50S_v1_1</label></li>
          <li class="d6 off"><i class="tw shut"></i><label><input type="checkbox" checked><svg class="i"><use href="#raster"/></svg>occurrence_170E_80N_v1_1</label></li>
          <li class="d6 off"><i class="tw shut"></i><label><input type="checkbox" checked><svg class="i"><use href="#raster"/></svg>occurrence_180W_50S_v1_1</label></li>
          <li class="d6 off"><i class="tw shut"></i><label><input type="checkbox" checked><svg class="i"><use href="#raster"/></svg>occurrence_180W_80N_v1_1</label></li>
          <li class="d1"><i class="tw open"></i><label><input type="checkbox" checked><svg class="i"><use href="#group"/></svg>MCD43</label></li>
          <li class="d2"><i class="tw open"></i><label><input type="checkbox" checked><svg class="i"><use href="#group"/></svg>v6</label></li>
          <li class="d3"><i class="tw open"></i><label><input type="checkbox" checked><svg class="i"><use href="#group"/></svg>vegetation</label></li>
          <li class="d4"><i class="tw open"></i><label><input type="checkbox" checked><svg class="i"><use href="#group"/></svg>daily</label></li>
          <li class="d5"><i class="tw open"></i><label><input type="checkbox" checked><svg class="i"><use href="#group"/></svg>NDVI</label></li>
          <li class="d6 cur name"><i class="tw open"></i><label><input type="checkbox" checked><svg class="i"><use href="#rastersel"/></svg><u>MOD_Grid_BRDF:Albedo_BSA_shortwave</u></label></li>
          <li class="d7"><i class="tw"></i><i class="swatch black"></i>0.009</li>
          <li class="d7"><i class="tw"></i><i class="swatch"></i>0.232</li>
          <li class="d6 name"><i class="tw open"></i><label><input type="checkbox" checked><svg class="i"><use href="#raster"/></svg>MOD_Grid_BRDF:Albedo_WSA_shortwave</label></li>
          <li class="d7"><i class="tw"></i><i class="swatch black"></i>0.009</li>
          <li class="d7"><i class="tw"></i><i class="swatch"></i>0.232</li>
        </ul>
        <div class="vbar"><i class="btn up"></i><i class="gap"></i><i class="thumb short"></i><i class="btn down"></i></div>
      </div>
    </section>
  </div>
  <div class="dockedge"><i></i></div>
  <section class="map" aria-label="Map canvas"><svg><g id="speckles" transform="translate(211 534)" shape-rendering="crispEdges"></g></svg></section>
</main>

<footer class="status">
  <div class="locate"><svg class="i"><use href="#mag"/></svg><input type="text" placeholder="Type to locate (Ctrl+K)" aria-label="Locate"></div>
  <label class="push" for="coord">Coordinate</label><input id="coord" class="field" value="18928314,-1999050">
  <svg class="i track"><use href="#track"/></svg>
  <label for="scale">Scale</label><span class="combo"><select id="scale"><option>1:4822710</option></select></span>
  <svg class="i lock"><use href="#lock"/></svg>
  <label for="magn">Magnifier</label><span class="spin w88"><input id="magn" value="100%"><i><b class="u"></b><b class="d"></b></i></span>
  <label class="rot" for="rot">Rotation</label><span class="spin w84"><input id="rot" value="0.0 °"><i><b class="u"></b><b class="d"></b></i></span>
  <label class="render"><input type="checkbox" checked>Render</label>
  <button class="crs"><svg class="i"><use href="#globe"/></svg>USER:100023</button>
  <button class="msg" aria-label="Messages"><svg class="i"><use href="#bubble"/></svg></button>
</footer>

<nav class="taskbar" aria-label="Taskbar">
  <button aria-label="Start"><svg viewBox="0 0 16 16"><path d="M0 2.300L7 1.200v6.300H0zM8 1l8-1v7.500H8zM0 8.500h7v6.300L0 13.800zM8 8.500h8V16l-8-1z" fill="#fff"/></svg></button>
  <button aria-label="Search"><svg viewBox="0 0 16 16"><circle cx="10" cy="5.800" r="5" fill="none" stroke="#fff" stroke-width="1.300"/><path d="M6.500 9.500L.800 15.200" stroke="#fff" stroke-width="1.300"/></svg></button>
  <button aria-label="Control panel"><svg viewBox="0 0 16 16"><path d="M.500 2.500h15v11H.500z" fill="#bfe2fa" stroke="#3d95d6" stroke-width="1.400"/><circle cx="5" cy="7" r="2.800" fill="#1f78c8"/><path d="M5 7V4a3 3 0 0 1 3 3z" fill="#f7a21b"/><path d="M10 5h4M10 7h4M3 11h4M10 10h4" stroke="#1f78c8" stroke-width="1.300"/></svg></button>
  <button aria-label="Monitor"><svg viewBox="0 0 16 16"><path d="M3.500 1.500h12v9h-12z" fill="#cfe4ee" stroke="#999"/><path d="M5 7l2-2 3 3 2-3 2 2" fill="none" stroke="#2c8bb5" stroke-width="1.200"/><path d="M0 4h3v10H0z" fill="#aaa"/><path d="M6 13h8v1.500H4z" fill="#ccc"/></svg></button>
  <button class="run" aria-label="Explorer"><svg viewBox="0 0 16 16"><path d="M0 1h6l1 2h9v11H0z" fill="#f6cf5b"/><path d="M0 5h16v9H0z" fill="#fbe08a"/><path d="M3 8h10v7.500h-3V11H6v4.500H3z" fill="#3fa7e0"/></svg></button>
  <button aria-label="Total Commander"><svg viewBox="0 0 16 16"><path d="M0 0h15l1 1v15H1l-1-1z" fill="#2a44c0"/><path d="M4 0h8v5H4z" fill="#e7e7ef"/><path d="M9 1h2v3H9z" fill="#2a44c0"/><path d="M2 7h12v8H2z" fill="#fff"/><path d="M6.500 9H4v4h2.500v-2H4M9 9v2h2.500M11.500 9v4.500" fill="none" stroke="#333"/></svg></button>
  <button aria-label="Paint"><svg viewBox="0 0 16 16"><path d="M0 10c0-8 13-8 12-1 0 3-4 1-4 3s-1 4-4 3-4-2-4-5z" fill="#cde0ee"/><circle cx="3" cy="9" r="1.500" fill="#d9452f"/><circle cx="6" cy="6" r="1.500" fill="#3d9a3d"/><circle cx="9.500" cy="7" r="1.500" fill="#2f65c8"/><circle cx="4" cy="12.500" r="1.300" fill="#e8b21c"/><path d="M12 0h3l-.5 7h-2z" fill="#d98a2b"/><path d="M13 7h1.500v9H13z" fill="#b8631a"/></svg></button>
  <button class="active" aria-label="Viewer"><svg viewBox="0 0 16 16"><path d="M0 10a8 8 0 1 1 16 0c-1 2-2 4-4 5L8 9l-6 5C1 13 0 12 0 10z" fill="#f4f4f4"/><path d="M3 5.500l4-2 5 2 2 4-3-1-3-2-4 3z" fill="#222"/><path d="M6 6l3-1 2 2-2 .5z" fill="#f4f4f4"/><path d="M4 15l4-4 4 4z" fill="#d8d8d8"/></svg></button>
  <button class="hover" aria-label="Calculator"><svg viewBox="0 0 16 16"><path d="M2 0h12v16H2z" fill="#fff"/><path d="M4 2.500h8" stroke="#222" stroke-width="2"/><path d="M4 6.500h9M4 9h9M4 11.500h9M4 14h9" stroke="#222" stroke-width="1.300" stroke-dasharray="1.500 1.500"/></svg></button>
  <button aria-label="Mail"><svg viewBox="0 0 16 16"><path d="M1 5l7-4 7 4v9H1z" fill="#fff"/><path d="M1 5.500h14L9 10h2l-3 2-1-3z" fill="#111"/></svg></button>
  <button aria-label="Skype"><svg viewBox="0 0 16 16"><circle cx="8" cy="8" r="6.500" fill="#1494df"/><path d="M10.500 6c-1-2-4.500-1.500-4.500.2C6 8.500 10.300 7.400 10.300 9.800c0 2-4 2-4.800.2" fill="none" stroke="#fff" stroke-width="1.500"/></svg></button>
  <button aria-label="Skype classic"><svg viewBox="0 0 16 16"><circle cx="5" cy="5" r="5" fill="#00aff0"/><circle cx="11" cy="11" r="5" fill="#00aff0"/><circle cx="8" cy="8" r="6.500" fill="#00aff0"/><path d="M11 5.800c-1-2.500-5.500-2-5.500.4C5.500 9 11 7.500 11 10.300c0 2.300-5 2.300-6 0" fill="none" stroke="#fff" stroke-width="2"/></svg></button>
  <button aria-label="Outlook"><svg viewBox="0 0 16 16"><path d="M7 3h9v10H7z" fill="#f4f8fc"/><path d="M8 5l4 3 4-3" fill="none" stroke="#0c6bc0" stroke-width="1.300"/><path d="M0 2l10-2v16L0 14z" fill="#0f6fc6"/><circle cx="5" cy="8" r="2.300" fill="none" stroke="#fff" stroke-width="1.600"/></svg></button>
  <button aria-label="Clock"><svg viewBox="0 0 16 16"><circle cx="8" cy="8" r="7.500" fill="#e8593a"/><circle cx="8" cy="8" r="5" fill="#fbe9e4"/><path d="M11 3L6 8l5 4" fill="none" stroke="#e8593a" stroke-width="2"/></svg></button>
  <button aria-label="Internet Explorer"><svg viewBox="0 0 16 16"><path d="M14 10.500c-2 5-11 4-11-2.500S12.500 1.500 13.500 8H5" fill="none" stroke="#41b6ee" stroke-width="2.600"/><path d="M1 15c-3-4 9-15 14-13" fill="none" stroke="#f4c430" stroke-width="1.500"/></svg></button>
  <button aria-label="Edge"><svg viewBox="0 0 16 16"><path d="M1.500 6C4 0 13 1 13.500 8H5" fill="none" stroke="#0b78d7" stroke-width="3"/><path d="M5.500 5c-5 6 1 12 8 8" fill="none" stroke="#0b78d7" stroke-width="3"/></svg></button>
  <button class="run" aria-label="Chrome"><svg viewBox="0 0 16 16"><circle cx="8" cy="8" r="7.500" fill="#f8c93a"/><path d="M8 8L1.500 4.200A7.500 7.500 0 0 1 14.500 4.200H8z" fill="#dd4b3e"/><path d="M8 8L1.500 4.200A7.500 7.500 0 0 0 7.500 15.500L11 10z" fill="#2c9f5b"/><circle cx="8" cy="8" r="3.600" fill="#fff"/><circle cx="8" cy="8" r="2.800" fill="#4483f0"/></svg></button>
  <button aria-label="Tor"><svg viewBox="0 0 16 16"><circle cx="8" cy="8" r="7.500" fill="#7d1fa8"/><path d="M8 1a7 7 0 0 1 0 14M8 3.500a4.500 4.500 0 0 1 0 9M8 6a2 2 0 0 1 0 4" fill="none" stroke="#dca6ee" stroke-width="1.100"/></svg></button>
  <button aria-label="Remote"><svg viewBox="0 0 16 16"><circle cx="8" cy="8" r="7.800" fill="#fff"/><path d="M4 6.500l3 2-2.500 3M12 3.500L8.500 6l3 3M7 9l3-2" fill="none" stroke="#111" stroke-width="1.600"/></svg></button>
  <button aria-label="TeamViewer"><svg viewBox="0 0 16 16"><path d="M0 0h16v16H0z" fill="#1479e0"/><circle cx="8" cy="8" r="6.500" fill="#fff"/><path d="M2.500 8L6 5.500v1.500h4V5.500L13.500 8 10 10.500V9H6v1.500z" fill="#1479e0"/></svg></button>
  <button aria-label="PuTTY"><svg viewBox="0 0 16 16"><path d="M7 1h7v7H7zM1 8h7v5H1z" fill="#c6c6c6"/><path d="M8.500 2.500h4v4h-4zM2.500 9h4v3h-4z" fill="#2434b5"/><path d="M11 3L5 8l3 .500L3 12" fill="none" stroke="#fff200" stroke-width="1.600"/><path d="M0 13h9v2H0z" fill="#aaa"/></svg></button>
  <button aria-label="FileZilla"><svg viewBox="0 0 16 16"><path d="M0 0h16v16H0z" fill="#b10c0c"/><path d="M4 13L5.500 4H9M4.500 8.500h4M8.500 6.500h5L8.500 12H13" fill="none" stroke="#fff" stroke-width="2"/></svg></button>
  <button aria-label="Command prompt"><svg viewBox="0 0 16 16"><path d="M.500 1.500h15v12H.500z" fill="#0a0a0a" stroke="#aaa"/><path d="M1 3h14" stroke="#ccc" stroke-width="2"/><path d="M5 7H3v3h2M7 7v.8M7 9.500v.8M8.500 6.500L10 10.500M11 10.500h3" fill="none" stroke="#fff"/></svg></button>
  <button aria-label="Mail tool"><svg viewBox="0 0 16 16"><circle cx="8" cy="8" r="7.800" fill="#27b3ea"/><path d="M3.500 6.500l2 3M5.500 6.500l-2 2M7 8.500h1.500M9.500 7l1 2 1-1.500 1.300 1V7" fill="none" stroke="#fff" stroke-width="1.400"/></svg></button>
  <button aria-label="VirtualBox"><svg viewBox="0 0 16 16"><path d="M2 3l6-2.500L14 3l-1 8-5 4.500L3 11z" fill="#1d3f70" stroke="#c9d6e5"/><path d="M3 4l5 2.500L13 4M8 6.500V14" fill="none" stroke="#dfe9f3" stroke-width="1.600"/></svg></button>
  <button aria-label="Git"><svg viewBox="0 0 16 16"><path d="M4.500 4L8 .500 11.500 4 8 7.500z" fill="#e45b50"/><path d="M4 4.500L7.500 8 4 11.500.500 8z" fill="#78a9ee"/><path d="M12 4.500L15.500 8 12 11.500 8.500 8z" fill="#63a857"/><path d="M8 8.500l3.500 3.500L8 15.500 4.500 12z" fill="#eebf4c"/><path d="M8 3v9M8 5l3 3" stroke="#222" stroke-width="1.300"/></svg></button>
  <button aria-label="MySQL Workbench"><svg viewBox="0 0 16 16"><path d="M.500.500h15v15H.500z" fill="#33739b" stroke="#6da5c3"/><path d="M3 3c5 0 8 4 10 11M3 3c1 3 2 6 1 10l3-3" fill="none" stroke="#c4d8e4"/></svg></button>
  <button aria-label="Anaconda"><svg viewBox="0 0 16 16"><circle cx="8" cy="8" r="6.300" fill="none" stroke="#3eb029" stroke-width="2.600"/><circle cx="8" cy="8" r="7.700" fill="none" stroke="#0a0a0a" stroke-dasharray="1 3"/></svg></button>
  <button aria-label="Firefox"><svg viewBox="0 0 16 16"><path d="M1 4l2 1c2-3 5-1 6-3 3 0 6 2 6 6.500C15 17 1 17 1 8z" fill="#1d8fe6"/><path d="M1 8c2-3 4 1 7 0s4-2 6-3c2 10-12 13-13 3z" fill="#4ec3f7"/><circle cx="8" cy="9" r="3" fill="#1a5fc4"/></svg></button>
  <button class="run" aria-label="PyCharm"><svg viewBox="0 0 16 16"><path d="M.500.500h15v15H.500z" fill="#050505" stroke="#21d789"/><path d="M4 9V3.500h1.500c2 0 2 2.800 0 2.800H4M12.500 4c-3-1.500-4.500.5-4 2.500s2.500 2.500 4 1.500M3 12.500h5.500" fill="none" stroke="#fff" stroke-width="1.300"/></svg></button>
  <button class="run" aria-label="VS Code"><svg viewBox="0 0 16 16"><path d="M11 0l5 2v12l-5 2z" fill="#2aa1ec"/><path d="M11.500 2L1 10.500M11.500 14L1 5.500" stroke="#1481cc" stroke-width="2.500"/></svg></button>
  <button aria-label="QC"><svg viewBox="0 0 16 16"><path d="M0 2l2-2h14v14l-2 2H0z" fill="#2fc248"/><circle cx="5" cy="8" r="2.300" fill="none" stroke="#fff" stroke-width="1.300"/><path d="M5.500 9.500l2 2M13 6c-2-1.200-3.700 0-3.700 2s1.700 3.200 3.700 2" fill="none" stroke="#fff" stroke-width="1.300"/></svg></button>
  <button aria-label="Blender"><svg viewBox="0 0 16 16"><path d="M1 11l7-5H3l1-1.500h6L8 2.500 9.500 2l6 5c1 7-9 8-10 3l-3 2z" fill="#ee8822"/><circle cx="10" cy="9" r="2.700" fill="#fff"/><circle cx="10" cy="9" r="1.600" fill="#2a5c9c"/></svg></button>
  <button aria-label="Inkscape"><svg viewBox="0 0 16 16"><path d="M8 2l6 6-3 2 1 2-4 1-4-1 1-2-3-2z" fill="#0d0f14"/><path d="M8 2l3.500 3.500L9.500 7 8 6 6 7 4.500 5.500z" fill="#eef3f8"/><path d="M2 9c4 2 8 2 12 0-3 3-9 3-12 0z" fill="#5a6b85"/></svg></button>
  <button class="run" aria-label="QGIS"><svg viewBox="0 0 16 16"><use href="#qgis"/></svg></button>
  <button aria-label="Color tool"><svg viewBox="0 0 16 16"><circle cx="7.500" cy="8" r="6.500" fill="#3d7fd0"/><path d="M2 4c3-3 8-3 11 1l-3 3z" fill="#f1c232"/><path d="M1 8c3-2 6 0 8 2l-3 5c-3-1-5-3-5-7z" fill="#d9442c"/><circle cx="12" cy="11.500" r="3" fill="#5a1515"/></svg></button>
  <button aria-label="Notepad++"><svg viewBox="0 0 16 16"><path d="M1 2h12v13.500H1z" fill="#fafafa"/><path d="M1 1h12v2.500H1z" fill="#777"/><path d="M2 5h10v9H2z" fill="#c9e86f"/><path d="M3 7h8M3 10h8" stroke="#5b9a23"/><path d="M6 12l8-11 2 1.500L8 13z" fill="#e8a030"/></svg></button>
  <button aria-label="Word"><svg viewBox="0 0 16 16"><path d="M8 2h8v12H8z" fill="#fff"/><path d="M9 5h6M9 7.500h6M9 10h6M9 12.500h6" stroke="#2a5599"/><path d="M0 2l10-2v16L0 14z" fill="#2a5599"/><path d="M2 5.500l1.300 5L5 6l1.700 4.500L8 5.500" fill="none" stroke="#fff" stroke-width="1.300"/></svg></button>
  <button aria-label="Excel"><svg viewBox="0 0 16 16"><path d="M8 2h8v12H8z" fill="#fff"/><path d="M10 5h5M10 8h5M10 11h5M12.500 3v10" stroke="#1e7145"/><path d="M0 2l10-2v16L0 14z" fill="#1e7145"/><path d="M3 5l4 6M7 5l-4 6" stroke="#fff" stroke-width="1.500"/></svg></button>
  <button aria-label="PowerPoint"><svg viewBox="0 0 16 16"><path d="M8 2h8v12H8z" fill="#fff"/><path d="M11 4h4v4M10 10h5M10 12h5" fill="none" stroke="#d04525" stroke-width="1.400"/><path d="M0 2l10-2v16L0 14z" fill="#d04525"/><path d="M3.500 12V5h2c2.500 0 2.500 3.700 0 3.700h-2" fill="none" stroke="#fff" stroke-width="1.500"/></svg></button>
  <button aria-label="PDF editor"><svg viewBox="0 0 16 16"><path d="M0 0h12l4 4v12H0z" fill="#f58a1f"/><path d="M12.500 0L16 3.500h-3.500z" fill="#fff"/><path d="M11.500 5.500c-4-1.500-7 1-6.500 4s5 2.500 6-1H8.500" fill="none" stroke="#fff" stroke-width="1.800"/></svg></button>
  <button aria-label="Acrobat"><svg viewBox="0 0 16 16"><path d="M.500.500h15v15H.500z" fill="#2a0707" stroke="#e1251b"/><path d="M3.500 12C6 10 8 6.500 7.500 4S9 9.500 12.500 10C9.500 9 6 10 3.500 12z" fill="none" stroke="#f3dada" stroke-width="1.100"/></svg></button>
  <button aria-label="Creative Cloud"><svg viewBox="0 0 16 16"><path d="M0 0h16v16H0z" fill="#c8161d"/><ellipse cx="8" cy="8" rx="6" ry="4" fill="none" stroke="#fff" stroke-width="1.300"/><path d="M9 9.500L6.500 7c-2-1.500-3.500 1.500-1 2.500M7.500 6L10 8.500c2 1 3-1.500 1-2.300" fill="none" stroke="#fff" stroke-width="1.200"/></svg></button>
  <div class="tray">
    <svg viewBox="0 0 16 16"><path d="M2.500 10.500L8 5l5.500 5.500" fill="none" stroke="#fff" stroke-width="1.300"/></svg>
    <svg viewBox="0 0 16 16"><path d="M2 13a3 3 0 0 1 0-6c1-4 7-5 9-1 5 0 6 6 3 7z" fill="#e8e8e8"/><path d="M4 13l3-5c3-2 5 0 9 3 0 1-1 2-2 2z" fill="#b9b9b9"/></svg>
    <svg viewBox="0 0 16 16"><path d="M4.500 5.500h10v6h-10zM15.500 7v3" fill="none" stroke="#fff" stroke-width="1.200"/><path d="M6 7h7v3H6z" fill="#fff"/><path d="M1 3h5v2.500L3.500 7 1 5.500zM2 1v2M5 1v2M3.500 7v4H0" fill="#0a0a0a" stroke="#fff"/></svg>
    <svg viewBox="0 0 16 16"><path d="M4.500 3.500h11v7h-11zM9.500 10.500v3M6 14h8M.500 1.500h4v4h-4zM2.500 5.500v6h2" fill="none" stroke="#fff"/></svg>
    <svg viewBox="0 0 16 16"><path d="M1.500 6.500h2l3-3.500v10l-3-3.500h-2zM9.500 6l5 5M14.500 6l-5 5" fill="none" stroke="#fff" stroke-width="1.100"/></svg>
    <span class="lang">ENG</span><time>12:13</time>
    <svg viewBox="0 0 16 16"><path d="M.700 1.500h14.600v10.500H10l-2 3v-3H.700z" fill="none" stroke="#fff" stroke-width="1.200"/></svg>
  </div>
  <div class="tip" role="tooltip">Calculator</div>
</nav>
<script src="map.js"></script>
</body>
</html>
```
FILE: styles.css
```
* { box-sizing: border-box; }
body {
  margin: 0; height: 100vh; display: flex; flex-direction: column;
  background: #efefef; color: #000; overflow: hidden;
  font: 11px/18px "Noto Sans", "Open Sans", sans-serif;
}
button { border: 0; padding: 0; margin: 0; background: none; font: inherit; color: inherit; }
i { font-style: normal; display: block; }
.sprite { position: absolute; width: 0; height: 0; }
.i { width: 16px; height: 16px; flex: none; display: block; }

.titlebar { height: 23px; flex: none; display: flex; align-items: center; gap: 5px; padding-left: 2px; background: #fff; color: #8c8c8c; font: 12px/22px "Open Sans", sans-serif; }
.winctl { margin-left: auto; display: flex; }
.winctl button { width: 46px; height: 22px; display: grid; place-items: center; }
.winctl svg { width: 10px; height: 10px; }

.menubar { height: 19px; flex: none; display: flex; gap: 12px; padding-left: 9px; color: #999; font: 12px/19px "Open Sans", sans-serif; }

.toolbar { height: 31px; flex: none; display: flex; align-items: center; padding-left: 5px; background: linear-gradient(#fafafa, #efefef); border-top: 1px solid #cfcfcf; border-bottom: 1px solid #b4b4b4; }
.second { border-top: 0; height: 32px; }
.grip { width: 5px; height: 18px; margin: 0 3px 0 8px; background: radial-gradient(circle at 1px 1px, #bbb 1px, transparent 1px) 0 0 / 3px 3px; }
.grip:first-child { margin-left: 0; }
.tb { width: 25px; height: 23px; display: flex; align-items: center; padding-left: 4px; position: relative; flex: none; }
.tb.on { border: 1px solid #aaa; border-radius: 2px; background: #dcdcdc; padding-left: 3px; }
.tb.more { width: 37px; gap: 6px; }
.tb.more::after, .tb.corner::after { content: ""; border: 4px solid transparent; border-top-color: #555; border-bottom: 0; flex: none; }
.tb.corner::after { position: absolute; right: 1px; bottom: 2px; border-width: 3px 3px 0; }
.tb:disabled .i { opacity: .4; filter: grayscale(.7); }
.tb:disabled::after { opacity: .5; }

.work { flex: 1; min-height: 0; display: flex; }
.dock { width: 572px; flex: none; display: flex; flex-direction: column; }
.panel { min-height: 0; display: flex; flex-direction: column; }
.browser { flex: 502 1 0; }
.layers { flex: 409 1 0; }
.phead { height: 20px; flex: none; display: flex; align-items: center; gap: 2px; padding: 0 2px 0 4px; }
.phead h2 { margin: 0 auto 0 0; font-size: 11px; font-weight: normal; line-height: 18px; }
.phead button { width: 12px; height: 12px; }
.phead svg { width: 12px; height: 12px; display: block; }
.ptools { height: 30px; flex: none; display: flex; align-items: center; padding: 0 0 2px 4px; }
.view { flex: 1; min-height: 0; display: grid; grid-template: minmax(0, 1fr) 14px / minmax(0, 1fr) 14px; background: #fff; border: 1px solid #b4b4b4; }
.novh { grid-template-rows: minmax(0, 1fr); }

.tree { margin: 0; padding: 0; list-style: none; overflow: hidden; display: flex; flex-direction: column; }
.bottom { justify-content: flex-end; }
.tree li, .tree label { display: flex; align-items: center; height: 18px; flex: none; white-space: nowrap; }
.tree .i, .swatch { width: 16px; height: 16px; margin: 0 6px 0 3px; }
.swatch.black { background: #000; }
.cur { background: #efefef; }
.d1 { padding-left: 20px; } .d2 { padding-left: 40px; } .d3 { padding-left: 60px; } .d4 { padding-left: 80px; }
.d5 { padding-left: 100px; } .d6 { padding-left: 120px; } .d7 { padding-left: 140px; } .d8 { padding-left: 160px; }
.tw { width: 20px; display: grid; place-items: center; flex: none; }
.open::before { content: ""; border: 4px solid transparent; border-top-color: #555; border-bottom: 0; }
.shut::before { content: ""; border: 4px solid transparent; border-left-color: #555; border-right: 0; }
.name { font: bold 12px/18px Lato, sans-serif; }
.off { font: italic bold 12px/18px "Open Sans", sans-serif; color: #b8b8b8; }

input[type=checkbox] { appearance: none; width: 14px; height: 14px; margin: 0 3px; border: 1px solid #b4b4b4; background: #fff; flex: none; display: grid; place-items: center; }
input[type=checkbox]:checked::before { content: ""; width: 10px; height: 10px; background: #000; clip-path: polygon(0 50%, 18% 42%, 38% 68%, 78% 0, 100% 4%, 46% 100%, 30% 100%); }
.off input[type=checkbox]:checked::before { background: #b4b4b4; }

.vbar, .hbar { display: flex; background: #e6e6e6; }
.vbar { flex-direction: column; border-left: 1px solid #b4b4b4; }
.hbar { border-top: 1px solid #b4b4b4; }
.corner-cell { background: #efefef; border: 1px solid #b4b4b4; border-width: 1px 0 0 1px; }
.btn { width: 13px; height: 14px; background: #f8f8f8; flex: none; display: grid; place-items: center; }
.btn::before { content: ""; border: 4px solid transparent; }
.up { border-bottom: 1px solid #b4b4b4; }
.up::before { border-bottom-color: #555; border-top: 0; }
.down { border-top: 1px solid #b4b4b4; }
.down::before { border-top-color: #555; border-bottom: 0; }
.left { border-right: 1px solid #b4b4b4; width: 14px; height: 13px; }
.left::before { border-right-color: #555; border-left: 0; }
.right { border-left: 1px solid #b4b4b4; width: 14px; height: 13px; }
.right::before { border-left-color: #555; border-right: 0; }
.thumb { background: linear-gradient(90deg, #fff, #f2f2f2); border: 1px solid #b4b4b4; border-width: 1px 0; }
.vbar .gap { flex: 1; }
.vbar .mid { flex: 92 1 0; }
.vbar .long { flex: 125 1 0; }
.vbar .low { flex: 191 1 0; }
.vbar .short { flex: 0 0 47px; border-bottom: 0; }
.hbar .thumb { flex: 1; border: 0; border-right: 1px solid #b4b4b4; background: linear-gradient(#fff, #f2f2f2); }
.hbar .gap { width: 11px; }

.splitter { height: 6px; flex: none; display: grid; place-items: center; }
.splitter i { width: 18px; height: 2px; background: repeating-linear-gradient(90deg, #bbb 0 1px, transparent 1px 3px); }
.dockedge { width: 6px; flex: none; display: grid; place-items: center; }
.dockedge i { width: 2px; height: 18px; background: repeating-linear-gradient(#bbb 0 1px, transparent 1px 3px); }
.map { flex: 1; min-width: 0; background: #fff; border: 1px solid #b4b4b4; border-right: 0; }
.map svg { display: block; width: 100%; height: 100%; }

.status { height: 28px; flex: none; display: flex; align-items: center; padding: 0 6px 0 4px; font: 11px/18px "DejaVu Sans Condensed", "DejaVu Sans", sans-serif; }
.status input, .status select { font: inherit; color: inherit; }
.locate { width: 200px; height: 22px; display: flex; align-items: center; gap: 6px; padding-left: 7px; background: #fff; border: 1px solid #aaa; border-radius: 2px; }
.locate .i { width: 14px; height: 14px; }
.locate input { flex: 1; min-width: 0; border: 0; padding: 0; outline: 0; background: none; font: 11px/18px "Open Sans", sans-serif; }
.locate input::placeholder { color: #777; }
.push { margin-left: auto; }
.field, .spin, .combo { height: 22px; margin-left: 4px; background: #fff; border: 1px solid #b0b0b0; border-radius: 2px; }
.field { width: 118px; text-align: center; padding: 0; }
.track { margin: 0 11px 0 4px; }
.combo { width: 81px; display: flex; position: relative; margin-left: 2px; }
.combo select { appearance: none; flex: 1; min-width: 0; border: 0; background: none; padding: 0 0 0 3px; }
.combo::after { content: ""; position: absolute; right: 6px; top: 8px; border: 4px solid transparent; border-top-color: #666; border-bottom: 0; }
.combo::before { content: ""; position: absolute; right: 19px; top: 0; bottom: 0; border-left: 1px solid #c0c0c0; }
.lock { margin: 0 7px 0 10px; }
.spin { display: flex; overflow: hidden; }
.w88 { width: 88px; } .w84 { width: 84px; }
.spin input { flex: 1; min-width: 0; border: 0; padding: 0 0 0 4px; background: none; }
.spin i { width: 13px; border-left: 1px solid #c0c0c0; background: #f6f6f6; display: grid; place-items: center; align-content: center; gap: 4px; }
.spin b { border: 3px solid transparent; }
.spin .u { border-bottom: 4px solid #666; border-top: 0; }
.spin .d { border-top: 4px solid #666; border-bottom: 0; }
.rot { margin: 0 5px 0 8px; }
.render { display: flex; align-items: center; margin-left: 3px; }
.render input { margin-right: 4px; }
.crs { display: flex; align-items: center; gap: 3px; margin: 0 18px; }

.taskbar { height: 29px; flex: none; display: flex; position: relative; background: #0a0a0a; color: #fff; }
.taskbar button { width: 37px; flex: none; display: grid; place-items: center; position: relative; }
.taskbar svg { width: 16px; height: 16px; display: block; }
.run::after, .active::after { content: ""; position: absolute; left: 5px; right: 4px; bottom: 0; height: 1px; background: #76b9ed; }
.taskbar .active { background: #3b3b3b; }
.active::after { left: 0; right: 0; }
.taskbar .hover { background: #222; }
.tray { margin-left: auto; display: flex; align-items: center; gap: 8px; padding-right: 24px; font: 12px/28px "Open Sans", sans-serif; }
.tray .lang { margin-left: 1px; }
.tray time { margin: 0 8px 0 3px; }
.tip { position: absolute; left: 282px; bottom: 29px; height: 20px; padding: 0 6px; background: #fff; border: 1px solid #767676; color: #575757; font: 11px/18px "Open Sans", sans-serif; box-shadow: 2px 2px 2px rgba(0, 0, 0, .5); }
```
FILE: map.js
```
// Raster cells that hold a value, scattered round the ridges where they occur.
// Each entry: x1, y1, x2, y2, spread, cells, lightest grey (0 = black only).
const ridges = [
  [24, 75, 28, 69, 2, 22, 0], [28, 69, 40, 62, 2, 24, 0], [43, 71, 55, 66, 4, 34, 40],
  [80, 78, 93, 80, 6, 16, 60], [92, 88, 98, 89, 4, 60, 60], [84, 110, 104, 102, 6, 62, 40],
  [98, 86, 125, 62, 4, 24, 120], [113, 64, 137, 57, 6, 54, 30], [128, 59, 173, 46, 4, 110, 20],
  [155, 48, 176, 46, 2, 50, 0], [173, 46, 197, 39, 3, 58, 0], [197, 39, 240, 26, 4, 34, 60],
  [186, 36, 199, 26, 4, 16, 60], [237, 23, 273, 24, 4, 66, 0], [246, 24, 262, 25, 2, 25, 0],
  [248, 38, 262, 29, 6, 22, 120], [234, 50, 250, 50, 8, 66, 20], [233, 60, 240, 60, 5, 28, 20],
  [241, 60, 227, 78, 4, 24, 40], [187, 75, 206, 60, 1, 26, 80], [150, 82, 163, 73, 3, 16, 20],
  [130, 85, 130, 104, 5, 34, 60], [197, 75, 224, 73, 4, 20, 120], [138, 120, 145, 116, 1, 13, 0],
  [206, 95, 222, 83, 3, 18, 190], [133, 68, 200, 54, 10, 130, 200], [107, 76, 113, 98, 8, 38, 210],
  [143, 80, 186, 68, 5, 40, 160], [173, 79, 184, 78, 4, 30, 230], [195, 58, 247, 32, 13, 100, 200],
  [117, 98, 122, 99, 4, 10, 40], [134, 122, 138, 125, 2, 6, 190],
  [24, 124, 34, 125, 3, 14, 20], [24, 130, 33, 130, 6, 50, 200], [26, 138, 42, 140, 6, 40, 90],
  [33, 142, 38, 155, 5, 32, 140], [31, 160, 40, 154, 3, 10, 120], [24, 172, 30, 168, 4, 28, 140],
  [35, 170, 39, 168, 5, 24, 20], [41, 163, 65, 151, 3, 18, 110], [25, 182, 29, 176, 2, 9, 20],
  [68, 180, 75, 180, 3, 9, 40], [69, 189, 73, 185, 1, 4, 190], [62, 239, 70, 237, 2, 11, 190],
  [77, 233, 77, 234, 2, 3, 0], [59, 192, 59, 192, 1, 3, 0], [80, 126, 83, 127, 0, 4, 0],
  [57, 121, 57, 121, 0, 1, 0], [97, 167, 97, 167, 0, 1, 120], [46, 119, 46, 119, 0, 1, 60],
  [79, 151, 79, 151, 0, 1, 30], [37, 123, 44, 140, 3, 9, 40]
];

let seed = 43;
const random = () => {
  seed = (seed * 1664525 + 1013904223) >>> 0;
  return seed / 4294967296;
};

const cells = {};
for (const [x1, y1, x2, y2, spread, count, light] of ridges) {
  for (let n = 0; n < count; n++) {
    const t = random();
    const x = Math.round(x1 + (x2 - x1) * t + (random() + random() - 1) * spread);
    const y = Math.round(y1 + (y2 - y1) * t + (random() + random() - 1) * spread);
    const grey = Math.round((light > 150 ? 0.6 + 0.4 * random() : random()) * light / 20) * 20;
    cells[grey] = (cells[grey] || '') + `M${Math.max(x, 23)} ${y}h1v1h-1z`;
  }
}

const layer = document.getElementById('speckles');
for (const [grey, d] of Object.entries(cells)) {
  const path = document.createElementNS('http://www.w3.org/2000/svg', 'path');
  path.setAttribute('d', d);
  path.setAttribute('fill', `rgb(${grey}, ${grey}, ${grey})`);
  layer.append(path);
}
```
